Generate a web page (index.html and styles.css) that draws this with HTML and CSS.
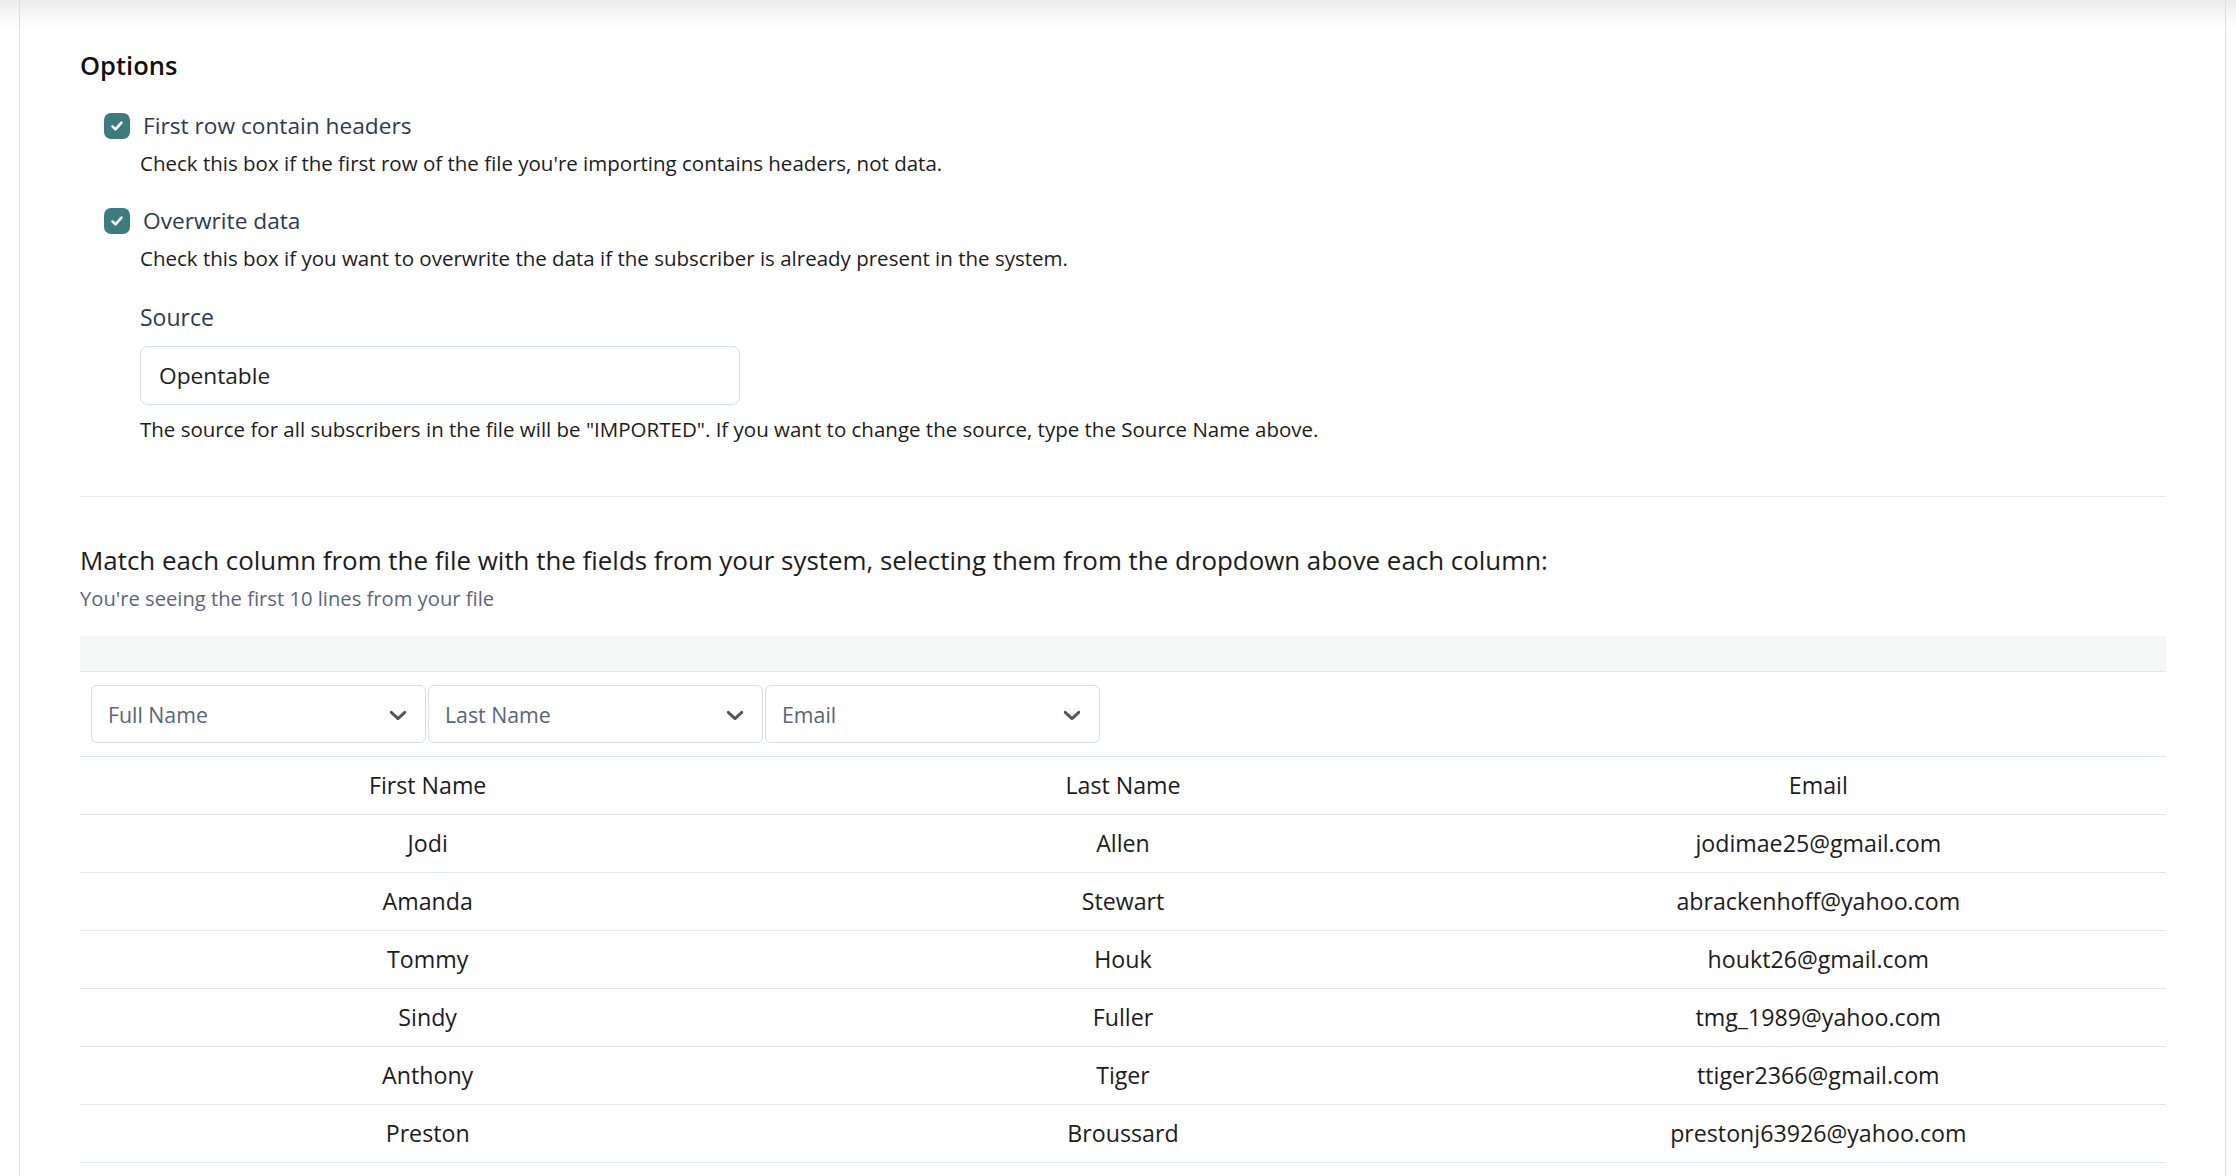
FILE: index.html
```html
<!DOCTYPE html>
<html lang="en">
<head>
<meta charset="utf-8">
<title>Import options</title>
<link rel="stylesheet" href="styles.css">
</head>
<body>
<div class="page">
  <section class="options">
    <h2 class="title">Options</h2>

    <div class="check-row">
      <span class="checkbox"><svg viewBox="0 0 24 24" width="18" height="18"><path d="M6 12.5l4 4 8-9" fill="none" stroke="#fff" stroke-width="3.4" stroke-linecap="round" stroke-linejoin="round"/></svg></span>
      <span class="check-label">First row contain headers</span>
    </div>
    <p class="desc">Check this box if the first row of the file you're importing contains headers, not data.</p>

    <div class="check-row second">
      <span class="checkbox"><svg viewBox="0 0 24 24" width="18" height="18"><path d="M6 12.5l4 4 8-9" fill="none" stroke="#fff" stroke-width="3.4" stroke-linecap="round" stroke-linejoin="round"/></svg></span>
      <span class="check-label">Overwrite data</span>
    </div>
    <p class="desc">Check this box if you want to overwrite the data if the subscriber is already present in the system.</p>

    <div class="source">
      <label class="source-label">Source</label>
      <div class="input">Opentable</div>
      <p class="helper">The source for all subscribers in the file will be "IMPORTED". If you want to change the source, type the Source Name above.</p>
    </div>
  </section>

  <hr class="divider">

  <section class="match">
    <h3 class="match-title">Match each column from the file with the fields from your system, selecting them from the dropdown above each column:</h3>
    <p class="match-sub">You're seeing the first 10 lines from your file</p>

    <div class="band"></div>
    <div class="selects">
      <div class="select"><span>Full Name</span><svg class="chev" viewBox="0 0 20 12" width="18" height="11"><path d="M2.5 2.5l7.5 7 7.5-7" fill="none" stroke="#555" stroke-width="3.2" stroke-linecap="round" stroke-linejoin="round"/></svg></div>
      <div class="select"><span>Last Name</span><svg class="chev" viewBox="0 0 20 12" width="18" height="11"><path d="M2.5 2.5l7.5 7 7.5-7" fill="none" stroke="#555" stroke-width="3.2" stroke-linecap="round" stroke-linejoin="round"/></svg></div>
      <div class="select"><span>Email</span><svg class="chev" viewBox="0 0 20 12" width="18" height="11"><path d="M2.5 2.5l7.5 7 7.5-7" fill="none" stroke="#555" stroke-width="3.2" stroke-linecap="round" stroke-linejoin="round"/></svg></div>
    </div>

    <div class="table">
      <div class="row head"><div>First Name</div><div>Last Name</div><div>Email</div></div>
      <div class="row"><div>Jodi</div><div>Allen</div><div>jodimae25@gmail.com</div></div>
      <div class="row"><div>Amanda</div><div>Stewart</div><div>abrackenhoff@yahoo.com</div></div>
      <div class="row"><div>Tommy</div><div>Houk</div><div>houkt26@gmail.com</div></div>
      <div class="row"><div>Sindy</div><div>Fuller</div><div>tmg_1989@yahoo.com</div></div>
      <div class="row"><div>Anthony</div><div>Tiger</div><div>ttiger2366@gmail.com</div></div>
      <div class="row"><div>Preston</div><div>Broussard</div><div>prestonj63926@yahoo.com</div></div>
    </div>
  </section>
</div>
</body>
</html>
```

FILE: styles.css
```css
* { box-sizing: border-box; }
html, body { height: 100%; }
body {
  margin: 0;
  background: #fff linear-gradient(#ebebeb, #fafafa 20px, #fff 30px) no-repeat;
  font-family: "Open Sans", "Noto Sans", sans-serif;
  color: #1c1c1c;
  overflow: hidden;
}
.page {
  margin: 0 10px 0 19px;
  min-height: 100%;
  border-left: 1px solid #dedede;
  border-right: 1px solid #dedede;
  padding: 51px 59px 0 60px;
}
.title {
  margin: 0;
  font-size: 25.5px;
  line-height: 28px;
  font-weight: 600;
  color: #111;
}
.check-row {
  display: flex;
  align-items: center;
  gap: 13px;
  margin: 32px 0 0 24px;
  height: 30px;
}
.check-row.second { margin-top: 30px; }
.checkbox {
  width: 26px;
  height: 26px;
  border-radius: 7px;
  background: #3b7d7e;
  display: flex;
  align-items: center;
  justify-content: center;
}
.check-label {
  font-size: 22.7px;
  line-height: 30px;
  color: #2e3a50;
}
.desc {
  margin: 9px 0 0 60px;
  font-size: 20.5px;
  line-height: 26px;
}
.desc + .source { margin-top: 32px; }
.source { margin: 32px 0 0 60px; }
.source-label {
  display: block;
  font-size: 23px;
  line-height: 28px;
  color: #2e3a50;
}
.input {
  margin-top: 15px;
  width: 600px;
  height: 59px;
  border: 1px solid #d9dee5;
  border-radius: 8px;
  padding: 0 18px;
  display: flex;
  align-items: center;
  font-size: 22.7px;
  color: #1c1c1c;
}
.helper {
  margin: 11px 0 0;
  font-size: 20.5px;
  line-height: 26px;
}
.divider {
  margin: 54px 0 0;
  border: 0;
  border-top: 1px solid #e6e9ed;
}
.match-title {
  margin: 46px 0 0;
  font-size: 25.9px;
  line-height: 34px;
  font-weight: 400;
  color: #1c1c1c;
}
.match-sub {
  margin: 8px 0 0;
  font-size: 20.2px;
  line-height: 26px;
  color: #5b6779;
}
.band {
  margin-top: 25px;
  height: 36px;
  background: #f5f7f7;
  border-bottom: 1px solid #e2e7ed;
}
.selects {
  display: flex;
  gap: 2px;
  padding: 13px 11px;
  border-bottom: 1px solid #e2e7ed;
}
.select {
  width: 335px;
  height: 58px;
  border: 1px solid #d6dce4;
  border-radius: 6px;
  display: flex;
  align-items: center;
  justify-content: space-between;
  padding: 0 18px 0 16px;
  font-size: 21.3px;
  color: #5a6577;
}
.chev { margin-top: 3px; }
.table { display: flex; flex-direction: column; }
.row {
  display: grid;
  grid-template-columns: repeat(3, 1fr);
  height: 58px;
  align-items: center;
  border-bottom: 1px solid #e2e7ed;
  font-size: 23.2px;
  line-height: 30px;
  padding-bottom: 1px;
  color: #1c1c1c;
  text-align: center;
}
```
